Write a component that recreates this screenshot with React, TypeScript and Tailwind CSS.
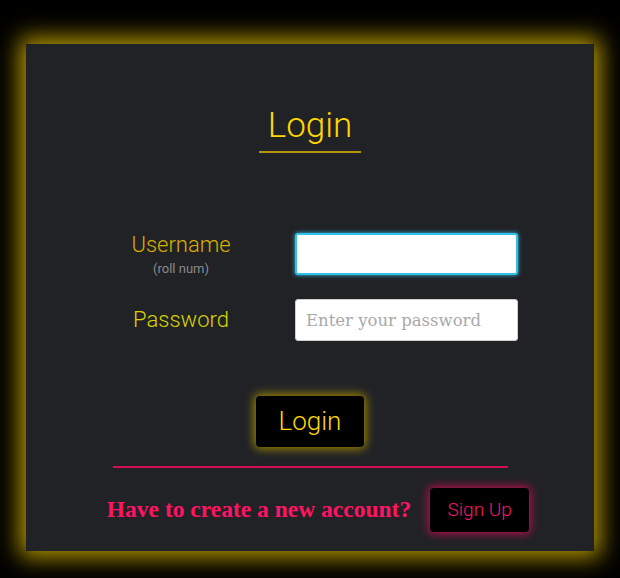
import React from "react";

function Field({ label, hint, placeholder, focused }: { label: string; hint?: string; placeholder?: string; focused?: boolean }) {
  return (
    <div className="flex items-center">
      <div className="w-[170px] flex flex-col items-center">
        <span className={`text-[22px] font-light leading-none ${hint ? "text-[#d9ae00]" : "text-[#d8d400]"}`}>{label}</span>
        {hint && <span className="text-[13px] text-[#8a8a8a] mt-[6px] leading-none">{hint}</span>}
      </div>
      <input
        className={`ml-[29px] w-[223px] h-[42px] rounded-[3px] bg-white px-[10px] text-[16.5px] outline-none text-black placeholder:text-[#a9a9a9] ${
          focused ? "border-2 border-[#33c0e8] shadow-[0_0_4px_#33c0e8]" : "border border-[#cfcfcf]"
        }`}
        style={{ fontFamily: '"DejaVu Serif", serif' }}
        placeholder={placeholder}
        autoFocus={focused}
      />
    </div>
  );
}

export default function App() {
  return (
    <div className="min-h-[578px] bg-black pt-[44px] px-[26px]" style={{ fontFamily: "Roboto, sans-serif" }}>
      <div className="h-[507px] bg-[#212226] shadow-[0_0_22px_6px_#b89a00] flex flex-col items-center pt-[60px]">
        <h1 className="text-[35px] font-light text-[#ffd700] leading-[43px] px-[9px] pb-[4px] border-b-2 border-[#b8960a]">Login</h1>

        <div className="self-start pl-[70px] mt-[80px] flex flex-col gap-[24px]">
          <Field label="Username" hint="(roll num)" focused />
          <Field label="Password" placeholder="Enter your password" />
        </div>

        <button className="mt-[55px] w-[108px] h-[51px] rounded-[4px] bg-black text-[26px] font-light text-[#ffd700] shadow-[0_0_10px_2px_#9c8600]">
          Login
        </button>

        <div className="mt-[19px] w-[395px] h-[2px] bg-[#d4104f]" />

        <div className="mt-[20px] ml-[16px] flex items-center gap-[19px]">
          <span className="text-[23.5px] font-bold text-[#ff1463]" style={{ fontFamily: '"Liberation Serif", serif' }}>
            Have to create a new account?
          </span>
          <button className="w-[99px] h-[44px] rounded-[4px] bg-black text-[19px] font-light text-[#ff1463] shadow-[0_0_8px_2px_#b0104a]">
            Sign Up
          </button>
        </div>
      </div>
    </div>
  );
}
